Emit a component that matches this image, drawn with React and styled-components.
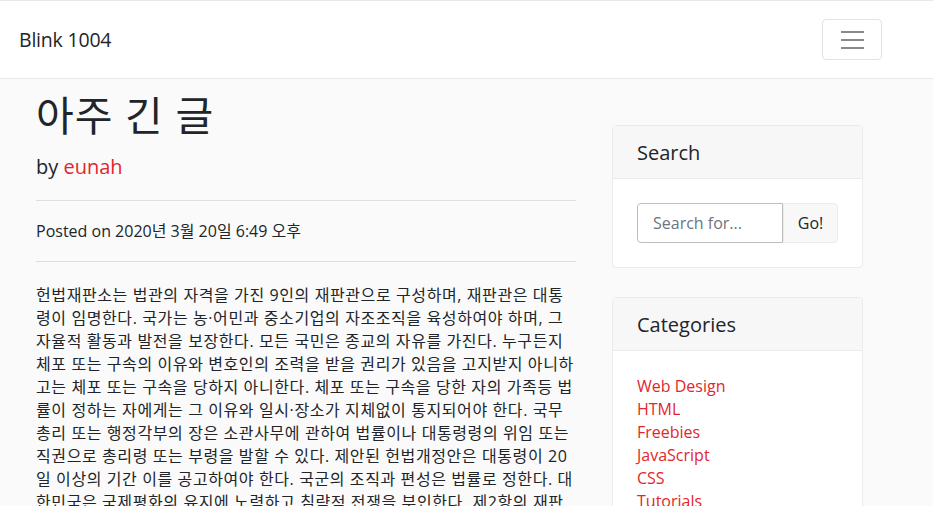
import React from "react";
import styled, { createGlobalStyle } from "styled-components";

const GlobalStyle = createGlobalStyle`
  html, body {
    margin: 0;
    padding: 0;
  }
  body {
    background: #fafafa;
    color: #212529;
    font-family: "Open Sans", "Noto Sans CJK KR", sans-serif;
    font-size: 16px;
    line-height: 1.5;
  }
  * {
    box-sizing: border-box;
  }
`;

const Navbar = styled.nav`
  align-items: center;
  background: #fff;
  border-top: 1px solid #e8e8e8;
  border-bottom: 1px solid #e8e8e8;
  display: flex;
  height: 79px;
  justify-content: space-between;
  padding: 0 51px 0 19px;
`;

const Brand = styled.a`
  color: #212529;
  font-size: 19.5px;
  letter-spacing: -0.2px;
  text-decoration: none;
`;

const Toggler = styled.button`
  align-items: center;
  background: #fff;
  border: 1px solid #e3e3e3;
  border-radius: 4px;
  display: flex;
  flex-direction: column;
  gap: 6px;
  height: 41px;
  justify-content: center;
  padding: 0;
  width: 60px;
`;

const TogglerBar = styled.span`
  background: #8a8a8a;
  display: block;
  height: 2px;
  width: 23px;
`;

const Layout = styled.div`
  display: grid;
  gap: 36px;
  grid-template-columns: 540px 251px;
  padding: 0 0 0 36px;
`;

const Post = styled.article`
  padding-top: 12px;
`;

const Title = styled.h1`
  font-size: 41px;
  font-weight: 400;
  letter-spacing: 1px;
  line-height: 1.2;
  margin: 0 0 12px;
`;

const Lead = styled.p`
  font-size: 20px;
  font-weight: 400;
  margin: 0 0 18px;
`;

const Link = styled.a`
  color: #e3262b;
  text-decoration: none;
`;

const Rule = styled.hr`
  border: 0;
  border-top: 1px solid #dedede;
  margin: 0;
`;

const Meta = styled.p`
  margin: 0;
  padding: 18px 0 18px;
`;

const Body = styled.p`
  letter-spacing: 0.6px;
  line-height: 23px;
  margin: 22px 0 0;
`;

const Sidebar = styled.aside`
  display: flex;
  flex-direction: column;
  gap: 29px;
  padding-top: 46px;
`;

const Card = styled.section`
  background: #fff;
  border: 1px solid #ebebeb;
  border-radius: 4px;
  overflow: hidden;
`;

const CardHeader = styled.h5`
  background: #f7f7f7;
  border-bottom: 1px solid #ebebeb;
  font-size: 20px;
  font-weight: 400;
  height: 53px;
  line-height: 53px;
  margin: 0;
  padding: 0 24px;
`;

const CardBody = styled.div`
  padding: 24px;
`;

const InputGroup = styled.div`
  display: flex;
`;

const SearchInput = styled.input`
  border: 1px solid #bdbdbd;
  border-radius: 4px 0 0 4px;
  color: #495057;
  font-family: inherit;
  font-size: 16px;
  height: 40px;
  padding: 0 15px;
  width: 146px;

  &::placeholder {
    color: #6c757d;
  }
`;

const GoButton = styled.button`
  background: #f8f8f8;
  border: 1px solid #ececec;
  border-radius: 0 4px 4px 0;
  color: #212529;
  font-family: inherit;
  font-size: 16px;
  height: 40px;
  width: 55px;
`;

const CategoryList = styled.ul`
  line-height: 23px;
  list-style: none;
  margin: 0;
  padding: 0;
`;

const categories = ["Web Design", "HTML", "Freebies", "JavaScript", "CSS", "Tutorials"];

const App = () => (
  <>
    <GlobalStyle />
    <Navbar>
      <Brand href="#">Blink 1004</Brand>
      <Toggler aria-label="Toggle navigation">
        <TogglerBar />
        <TogglerBar />
        <TogglerBar />
      </Toggler>
    </Navbar>
    <Layout>
      <Post>
        <Title>아주 긴 글</Title>
        <Lead>
          by <Link href="#">eunah</Link>
        </Lead>
        <Rule />
        <Meta>Posted on 2020년 3월 20일 6:49 오후</Meta>
        <Rule />
        <Body>
          헌법재판소는 법관의 자격을 가진 9인의 재판관으로 구성하며, 재판관은 대통령이 임명한다. 국가는 농·어민과
          중소기업의 자조조직을 육성하여야 하며, 그 자율적 활동과 발전을 보장한다. 모든 국민은 종교의 자유를
          가진다. 누구든지 체포 또는 구속의 이유와 변호인의 조력을 받을 권리가 있음을 고지받지 아니하고는 체포
          또는 구속을 당하지 아니한다. 체포 또는 구속을 당한 자의 가족등 법률이 정하는 자에게는 그 이유와
          일시·장소가 지체없이 통지되어야 한다. 국무총리 또는 행정각부의 장은 소관사무에 관하여 법률이나
          대통령령의 위임 또는 직권으로 총리령 또는 부령을 발할 수 있다. 제안된 헌법개정안은 대통령이 20일 이상의
          기간 이를 공고하여야 한다. 국군의 조직과 편성은 법률로 정한다. 대한민국은 국제평화의 유지에 노력하고
          침략적 전쟁을 부인한다. 제2항의 재판관 중 3인은 국회에서 선출하는 자를, 3인은 대법원장이 지명하는
          자를 임명한다.
        </Body>
      </Post>
      <Sidebar>
        <Card>
          <CardHeader>Search</CardHeader>
          <CardBody>
            <InputGroup>
              <SearchInput placeholder="Search for..." />
              <GoButton type="button">Go!</GoButton>
            </InputGroup>
          </CardBody>
        </Card>
        <Card>
          <CardHeader>Categories</CardHeader>
          <CardBody>
            <CategoryList>
              {categories.map((c) => (
                <li key={c}>
                  <Link href="#">{c}</Link>
                </li>
              ))}
            </CategoryList>
          </CardBody>
        </Card>
      </Sidebar>
    </Layout>
  </>
);

export default App;
